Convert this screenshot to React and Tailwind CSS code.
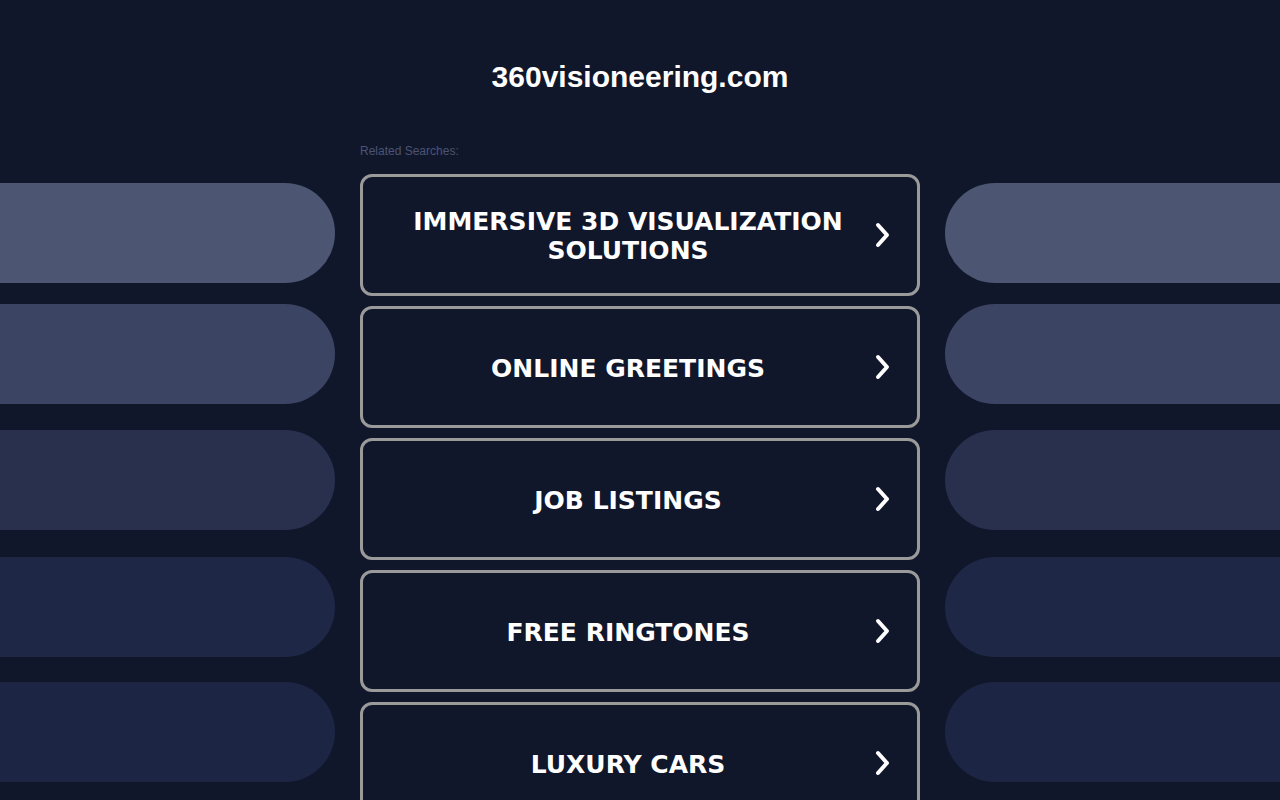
import React from "react";

const searches = [
  ["IMMERSIVE 3D VISUALIZATION", "SOLUTIONS"],
  ["ONLINE GREETINGS"],
  ["JOB LISTINGS"],
  ["FREE RINGTONES"],
  ["LUXURY CARS"],
];

const pills = [
  { bg: "bg-[#4c5673]", mt: "mt-[183px]" },
  { bg: "bg-[#3b4462]", mt: "mt-[21px]" },
  { bg: "bg-[#28304e]", mt: "mt-[26px]" },
  { bg: "bg-[#1f2747]", mt: "mt-[27px]" },
  { bg: "bg-[#1d2545]", mt: "mt-[25px]" },
];

const Chevron = () => (
  <svg width="24" height="28" viewBox="0 0 24 28" fill="none">
    <polyline
      points="7,4 16,14 7,24"
      stroke="white"
      strokeWidth="4"
      strokeLinecap="round"
      strokeLinejoin="round"
    />
  </svg>
);

const SideColumn = ({ side }) => (
  <div className="flex flex-col">
    {pills.map((p, i) => (
      <div
        key={i}
        className={`h-[100px] ${p.bg} ${p.mt} ${
          side === "left" ? "rounded-r-[50px]" : "rounded-l-[50px]"
        }`}
      />
    ))}
  </div>
);

export default function App() {
  return (
    <div className="h-[800px] overflow-hidden bg-[#11172b] font-['Liberation_Sans',Arial,sans-serif]">
      <div className="grid grid-cols-[335px_560px_335px] gap-x-[25px]">
        <SideColumn side="left" />

        <div className="flex flex-col">
          <h1 className="mt-[60px] text-center text-[30px] leading-[34px] font-bold text-white">
            360visioneering.com
          </h1>
          <p className="mt-[50px] text-[12px] leading-[14px] text-[#4b5475]">
            Related Searches:
          </p>
          <div className="mt-[16px] flex flex-col gap-[10px]">
            {searches.map((lines, i) => (
              <a
                key={i}
                href="#"
                className="flex h-[122px] items-center rounded-[12px] border-[3px] border-[#9a9a9a] px-[22px]"
              >
                <div className="flex-1 pt-[2px] text-center font-['DejaVu_Sans',Verdana,sans-serif] text-[25px] leading-[29px] font-bold text-white">
                  {lines.map((l, j) => (
                    <div key={j}>{l}</div>
                  ))}
                </div>
                <Chevron />
              </a>
            ))}
          </div>
        </div>

        <SideColumn side="right" />
      </div>
    </div>
  );
}
